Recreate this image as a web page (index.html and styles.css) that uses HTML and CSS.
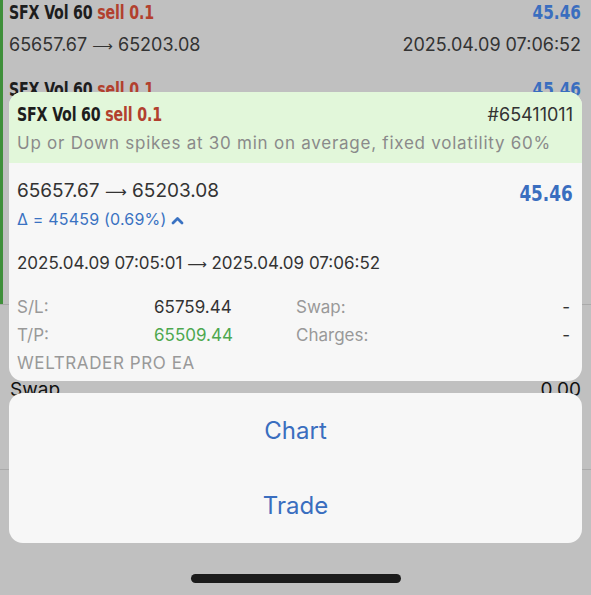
FILE: index.html
```html
<!DOCTYPE html>
<html lang="en">
<head>
    <meta charset="UTF-8">
    <meta name="viewport" content="width=device-width, initial-scale=1.0">
    <title>Position</title>
    <link rel="stylesheet" href="styles.css">
</head>
<body>
    <div id="screen">
        <div id="list">
            <div class="group">
                <div class="item">
                    <div class="row">
                        <span class="title">SFX Vol 60 <span class="sell">sell 0.1</span></span>
                        <span class="profit">45.46</span>
                    </div>
                    <div class="row sub">
                        <span>65657.67 <span class="arr">&#10230;</span> 65203.08</span>
                        <span>2025.04.09 07:06:52</span>
                    </div>
                </div>
                <div class="item">
                    <div class="row">
                        <span class="title">SFX Vol 60 <span class="sell">sell 0.1</span></span>
                        <span class="profit">45.46</span>
                    </div>
                </div>
            </div>
            <div class="line"></div>
            <div class="summary">
                <span>Swap</span>
                <span>0.00</span>
            </div>
            <div class="line"></div>
        </div>

        <div id="overlay">
            <div class="card">
                <div class="card_head">
                    <div class="row">
                        <span class="title">SFX Vol 60 <span class="sell">sell 0.1</span></span>
                        <span class="ticket">#65411011</span>
                    </div>
                    <div class="comment">Up or Down spikes at 30 min on average, fixed volatility 60%</div>
                </div>
                <div class="card_body">
                    <div class="row">
                        <span class="prices">65657.67 <span class="arr">&#10230;</span> 65203.08</span>
                        <span class="profit big">45.46</span>
                    </div>
                    <div class="delta">
                        &Delta; = 45459 (0.69%)
                        <svg width="13" height="9" viewBox="0 0 13 9"><polyline points="2,7 6.5,2.5 11,7" fill="none" stroke="#3a72c2" stroke-width="2.8" stroke-linecap="round" stroke-linejoin="round"/></svg>
                    </div>
                    <div class="times">2025.04.09 07:05:01 <span class="arr">&#10230;</span> 2025.04.09 07:06:52</div>
                    <div class="details">
                        <span class="lbl">S/L:</span>
                        <span class="val">65759.44</span>
                        <span class="lbl">Swap:</span>
                        <span class="val right">-</span>
                        <span class="lbl">T/P:</span>
                        <span class="val green">65509.44</span>
                        <span class="lbl">Charges:</span>
                        <span class="val right">-</span>
                    </div>
                    <div class="lbl ea">WELTRADER PRO EA</div>
                </div>
            </div>

            <div class="sheet">
                <div class="action">Chart</div>
                <div class="action">Trade</div>
            </div>

            <div class="home_bar"></div>
        </div>
    </div>
</body>
</html>
```
FILE: styles.css
```css
*{
    box-sizing: border-box;
}

body{
    margin: 0;
    background-color: #c0c0c0;
    font-family: Inter, "Liberation Sans", Arial, sans-serif;
    color: #333;
}

#screen{
    position: relative;
    width: 591px;
    height: 595px;
    overflow: hidden;
}

/* list behind the popup */
.group{
    height: 304px;
    border-left: 3px solid #3f8f3a;
}

.item{
    padding: 0 10px 0 6px;
}

.item + .item{
    padding-top: 4px;
}

.row{
    display: flex;
    justify-content: space-between;
    align-items: center;
}

.sub{
    font-size: 18px;
    color: #333;
    height: 36px;
    margin-top: 2px;
    margin-bottom: 11px;
}

.arr{
    font-family: "DejaVu Sans", sans-serif;
    font-weight: normal;
    font-size: 0.8em;
}

.title{
    display: inline-block;
    font-family: "DejaVu Sans Condensed", sans-serif;
    font-weight: bold;
    font-size: 19px;
    letter-spacing: -0.2px;
    color: #1d1d1d;
    line-height: 24px;
    transform: scaleX(0.83);
    transform-origin: left center;
}

.sell{
    color: #b2402e;
}

.profit{
    display: inline-block;
    font-family: "DejaVu Sans Condensed", sans-serif;
    font-weight: bold;
    font-size: 20px;
    color: #3a6ebf;
    transform: scaleX(0.85);
    transform-origin: right center;
}

.line{
    height: 1px;
    background: #aaa;
}

.summary{
    display: flex;
    justify-content: space-between;
    padding: 73px 10px 0 10px;
    height: 164px;
    font-size: 19px;
    color: #111;
}

/* popup */
#overlay{
    position: absolute;
    left: 0;
    top: 0;
    right: 0;
    bottom: 0;
    display: flex;
    flex-direction: column;
    align-items: center;
    padding-top: 92px;
}

.card{
    width: 573px;
    height: 289px;
    border-radius: 14px;
    overflow: hidden;
    background: #f7f7f7;
}

.card_head{
    background: #e2f7da;
    height: 71px;
    padding: 10px 9px 0 8px;
}

.ticket{
    font-size: 18px;
    color: #333;
}

.comment{
    font-size: 17px;
    letter-spacing: 0.75px;
    color: #8a8a8a;
    margin-top: 7px;
}

.card_body{
    padding: 12px 9px 0 8px;
}

.prices{
    font-size: 19px;
    color: #333;
}

.big{
    font-size: 22px;
    margin-top: 6px;
}

.delta{
    font-size: 16px;
    letter-spacing: 0.2px;
    color: #3a72c2;
    margin-top: 3px;
}

.times{
    font-size: 17px;
    color: #333;
    margin-top: 24px;
}

.details{
    display: grid;
    grid-template-columns: 137px 142px 1fr auto;
    row-gap: 8px;
    margin-top: 24px;
    font-size: 17px;
}

.details .right{
    padding-right: 3px;
}

.lbl{
    color: #999;
    font-size: 17px;
}

.val{
    color: #333;
}

.green{
    color: #4da84f;
}

.ea{
    margin-top: 8px;
    letter-spacing: 0.6px;
}

.sheet{
    width: 573px;
    height: 150px;
    margin-top: 12px;
    border-radius: 14px;
    background: #f7f7f7;
    display: flex;
    flex-direction: column;
}

.action{
    flex: 1;
    display: flex;
    align-items: center;
    justify-content: center;
    font-size: 24px;
    color: #3a6ebf;
}

.home_bar{
    width: 210px;
    height: 9px;
    border-radius: 5px;
    background: #1b1b1b;
    margin-top: 31px;
}
```
